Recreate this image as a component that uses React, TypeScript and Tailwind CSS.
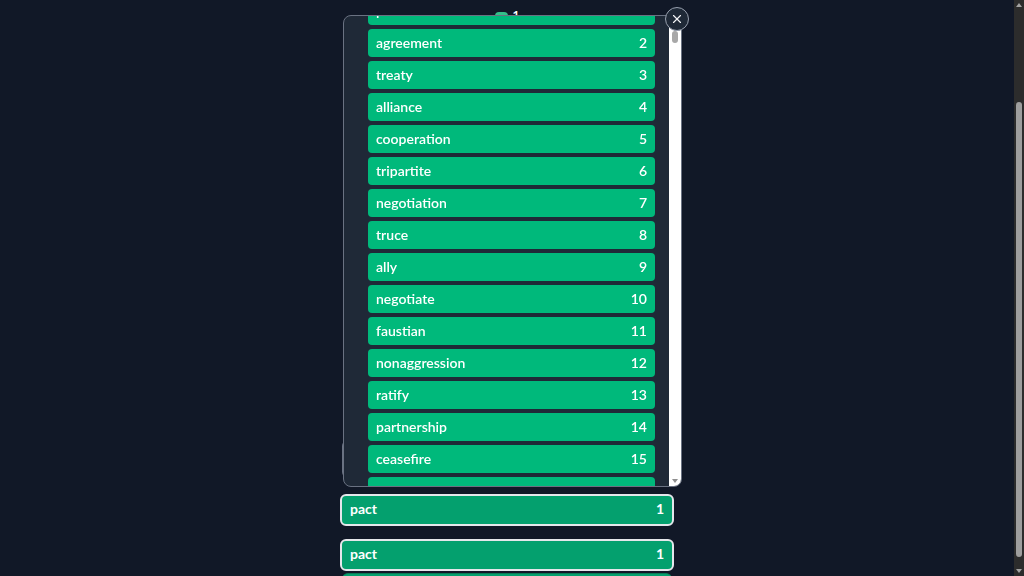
import React, { useLayoutEffect, useRef } from "react";
import { X } from "lucide-react";

const baseWords = [
  "pact",
  "agreement",
  "treaty",
  "alliance",
  "cooperation",
  "tripartite",
  "negotiation",
  "truce",
  "ally",
  "negotiate",
  "faustian",
  "nonaggression",
  "ratify",
  "partnership",
  "ceasefire",
  "accord",
  "covenant",
  "compact",
  "bargain",
  "deal",
  "pledge",
  "contract",
  "league",
  "coalition",
  "bloc",
  "entente",
  "signatory",
  "armistice",
  "diplomacy",
  "understanding",
];

// only the first rows are ever on screen
const words = Array.from({ length: 60 }, (_, i) => baseWords[i % baseWords.length]);

function WordRow({ word, rank }: { word: string; rank: number }) {
  return (
    <div className="flex h-7 w-[287px] shrink-0 items-center justify-between rounded bg-[#00b97b] px-2 pb-px text-[14px] font-semibold text-white">
      <span>{word}</span>
      <span>{rank}</span>
    </div>
  );
}

function GuessCard({ word, rank }: { word: string; rank: number }) {
  return (
    <div className="flex h-8 items-center justify-between rounded-md border-2 border-gray-200 bg-[#04a06e] px-2 pb-[3px] text-[14px] font-bold text-white">
      <span>{word}</span>
      <span>{rank}</span>
    </div>
  );
}

export default function App() {
  const pageRef = useRef<HTMLDivElement>(null);
  const listRef = useRef<HTMLDivElement>(null);

  useLayoutEffect(() => {
    if (pageRef.current) pageRef.current.scrollTop = 117;
    if (listRef.current) listRef.current.scrollTop = 35;
  }, []);

  return (
    <div className="flex h-screen bg-[#111827] font-['Lato','Liberation_Sans',sans-serif]">
      <div ref={pageRef} className="flex-1 overflow-y-scroll [scrollbar-width:none]">
        <div className="mx-auto flex w-[334px] flex-col pt-[126px]">
          <div className="flex h-4 items-start justify-center gap-[5px]">
            <div className="mt-[3px] h-[13px] w-[13px] rounded-sm bg-[#34c08a]" />
            <span className="text-[12px] font-bold leading-none text-white">1</span>
          </div>
          <div className="h-[415px]" />
          <div className="ml-[2px] h-[38px] rounded-md border border-gray-500" />
          <div className="mt-4">
            <GuessCard word="pact" rank={1} />
          </div>
          <div className="mt-[13px]">
            <GuessCard word="pact" rank={1} />
          </div>
          <div className="mx-[2px] mt-[2px] h-8 rounded-md border-t border-[#0b7a56] bg-[#04a06e]" />
        </div>
      </div>

      {/* page scrollbar */}
      <div className="flex w-[10px] flex-col items-center bg-[#2c2c2c]">
        <div className="mt-[3px] h-0 w-0 border-x-[3px] border-b-[4px] border-x-transparent border-b-[#a3a3a3]" />
        <div className="mt-[95px] h-[455px] w-[6px] rounded-full bg-[#9e9e9e]" />
        <div className="mt-auto mb-[3px] h-0 w-0 border-x-[3px] border-t-[4px] border-x-transparent border-t-[#a3a3a3]" />
      </div>

      <div className="fixed left-[343px] top-[15px] flex h-[472px] w-[339px] overflow-hidden rounded-lg border border-gray-500 bg-[#1f2937]">
        <div
          ref={listRef}
          className="flex h-full flex-1 flex-col gap-1 overflow-y-scroll py-4 pl-6 [scrollbar-width:none]"
        >
          {words.map((w, i) => (
            <WordRow key={i} word={w} rank={i + 1} />
          ))}
        </div>
        <div className="flex w-[12px] flex-col items-center bg-white">
          <div className="mt-[15px] h-[12px] w-[6px] rounded-full bg-[#a8a8a8]" />
          <div className="mt-auto mb-[3px] h-0 w-0 border-x-[3px] border-t-[4px] border-x-transparent border-t-[#8f8f8f]" />
        </div>
      </div>

      <button className="fixed left-[665px] top-[7px] flex h-6 w-6 items-center justify-center rounded-full border border-gray-400 bg-[#1f2937] text-gray-100">
        <X size={14} strokeWidth={2} />
      </button>
    </div>
  );
}
